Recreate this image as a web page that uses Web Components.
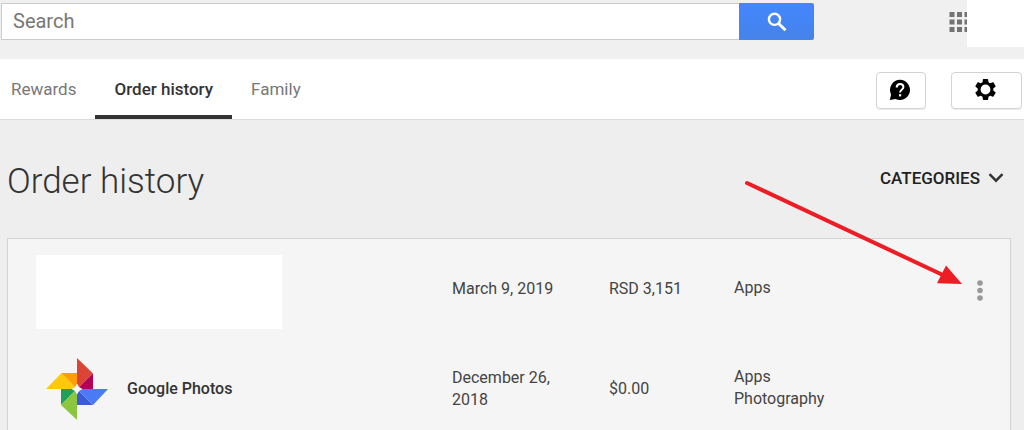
<!DOCTYPE html>
<html lang="en">
<head>
<meta charset="utf-8">
<title>Order history</title>
<style>
  html, body { margin: 0; height: 100%; }
  body { font-family: Roboto, "Liberation Sans", sans-serif; color: #333; background: #eee; overflow: hidden; }
</style>
</head>
<body>
<store-page>
  <search-header slot="header"></search-header>
  <tab-bar slot="tabs"></tab-bar>
  <page-title slot="title">Order history</page-title>
  <order-panel></order-panel>
</store-page>

<template id="store-page">
  <style>
    :host { display: block; position: relative; height: 100vh; overflow: hidden; }
    main { padding: 0 13px 16px 7px; }
  </style>
  <slot name="header"></slot>
  <slot name="tabs"></slot>
  <main>
    <slot name="title"></slot>
    <slot></slot>
  </main>
  <pointer-arrow></pointer-arrow>
</template>

<template id="search-header">
  <style>
    :host { display: flex; height: 59px; background: #f0f0f0; }
    form { flex: 1; display: flex; height: 37px; margin: 3px 0 0 1px; }
    input { flex: 1; min-width: 0; box-sizing: border-box; margin: 0; padding: 0 11px 2px; border: 1px solid #ccc; border-right: 0; border-radius: 0; background: #fff; font: 20px Roboto, sans-serif; color: #333; outline: 0; }
    input::placeholder { color: #777; opacity: 1; }
    button { border: 0; padding: 0; margin: 0; }
    .go { display: grid; place-items: center; width: 75px; border-radius: 0 2px 2px 0; background: linear-gradient(#4387fd, #4683ea); }
    .apps { width: 18px; height: 43px; margin-left: 135px; overflow: hidden; background: none; }
    .apps svg { display: block; }
    .account { width: 57px; height: 47px; background: #fff; }
  </style>
  <form role="search" onsubmit="return false">
    <input type="text" placeholder="Search" aria-label="Search">
    <button class="go" aria-label="Search">
      <svg width="20" height="20" viewBox="0 0 20 20" fill="none" stroke="#fff"><circle cx="7.500" cy="7.300" r="5.600" stroke-width="2.400"/><path d="M11.600 11.500 18.500 18.300" stroke-width="3"/></svg>
    </button>
  </form>
  <button class="apps" aria-label="Apps">
    <svg width="22" height="21" viewBox="0 0 22 21" fill="#737373"><path d="M.5 1h5v5h-5zM8 1h5v5H8zM15.500 1h5v5h-5zM.5 8.500h5v5h-5zM8 8.500h5v5H8zM15.500 8.500h5v5h-5zM.5 16h5v5h-5zM8 16h5v5H8zM15.500 16h5v5h-5z"/></svg>
  </button>
  <div class="account"></div>
</template>

<template id="tab-bar">
  <style>
    :host { display: flex; justify-content: space-between; height: 60px; background: #fff; border-bottom: 1px solid #dcdcdc; }
    nav { display: flex; }
    a { box-sizing: border-box; padding: 0 19px; font-size: 17px; line-height: 60px; color: #777; text-decoration: none; white-space: nowrap; }
    a:first-child { padding-left: 11px; }
    a.on { color: #333; font-weight: 500; border-bottom: 4px solid #333; }
    .tools { display: flex; gap: 25px; padding: 13px 2px 0 0; }
    button { display: grid; place-items: center; box-sizing: border-box; height: 37px; width: 50px; padding: 0 2px 2px 0; border: 1px solid #d3d3d3; border-radius: 4px; background: #fff; box-shadow: 0 1px 1px #eee; }
    button.wide { width: 71px; }
  </style>
  <nav>
    <a href="#rewards">Rewards</a>
    <a class="on" href="#orders" aria-current="page">Order history</a>
    <a href="#family">Family</a>
  </nav>
  <div class="tools">
    <button aria-label="Help">
      <svg width="22" height="22" viewBox="0 0 22 22"><path d="M11 .8A10.100 10.100 0 1 1 6.500 20L.8 21l1.300-5.500A10.100 10.100 0 0 1 11 .8z"/><path d="M7.700 8.500C7.700 6.300 9 5 11 5s3.400 1.300 3.400 3.100c0 2.700-3.300 2.700-3.300 5.300" fill="none" stroke="#fff" stroke-width="2"/><path d="M10 15.200h2.200v2.200H10z" fill="#fff"/></svg>
    </button>
    <button class="wide" aria-label="Settings">
      <svg width="25" height="25" viewBox="0 0 24 24"><path d="M19.430 12.980c.04-.32.07-.64.07-.98s-.03-.66-.07-.98l2.110-1.650c.19-.15.24-.42.12-.64l-2-3.460c-.12-.22-.39-.3-.61-.22l-2.490 1c-.52-.4-1.080-.73-1.690-.98l-.38-2.650C14.460 2.180 14.250 2 14 2h-4c-.25 0-.46.18-.49.42l-.38 2.650c-.61.25-1.170.59-1.690.98l-2.490-1c-.23-.09-.49 0-.61.22l-2 3.460c-.13.22-.07.49.12.64l2.110 1.650c-.04.32-.07.65-.07.98s.03.66.07.98l-2.110 1.650c-.19.15-.24.42-.12.64l2 3.460c.12.22.39.3.61.22l2.490-1c.52.4 1.080.73 1.690.98l.38 2.650c.03.24.24.42.49.42h4c.25 0 .46-.18.49-.42l.38-2.650c.61-.25 1.170-.59 1.690-.98l2.490 1c.23.09.49 0 .61-.22l2-3.460c.12-.22.07-.49-.12-.64z"/><circle cx="12" cy="12" r="4.700" fill="#fff"/></svg>
    </button>
  </div>
</template>

<template id="page-title">
  <style>
    :host { display: flex; justify-content: space-between; align-items: center; height: 118px; }
    h1 { margin: 0; padding-top: 6px; font-size: 35px; line-height: 44px; font-weight: 300; }
    button { display: flex; align-items: center; gap: 8px; padding: 0 7px 2px 0; border: 0; background: none; font: 500 17px Roboto, sans-serif; color: #222; }
  </style>
  <h1><slot></slot></h1>
  <button aria-haspopup="true">CATEGORIES
    <svg width="16" height="10" viewBox="0 0 16 10" fill="none" stroke="#333" stroke-width="2.400"><path d="M1.500 1.200 8 7.700l6.500-6.500"/></svg>
  </button>
</template>

<template id="order-panel">
  <style>
    :host { display: block; border: 1px solid #d3d3d3; background: #f5f5f5; }
    table { width: 100%; table-layout: fixed; border-collapse: collapse; font-size: 16px; line-height: 22px; color: #444; }
    .date { width: 157px; } .price { width: 125px; } .kind { width: 215px; } .menu { width: 61px; }
    td { padding: 0; height: 101px; text-align: left; vertical-align: middle; }
    tr:first-child td { height: 99px; }
    .app { display: flex; align-items: center; gap: 19px; padding-left: 38px; font-weight: 500; color: #333; }
    .blank { width: 246px; height: 74px; margin: 7px 0 0 28px; background: #fff; }
    td.when { padding-right: 40px; }
    ul { margin: 0; padding: 0 0 2px; list-style: none; }
    button { display: block; margin: 0 auto; padding: 3px 0 0; border: 0; background: none; }
    button svg { display: block; }
  </style>
  <table aria-label="Order history">
    <colgroup><col><col class="date"><col class="price"><col class="kind"><col class="menu"></colgroup>
    <tbody>
      <tr>
        <td><div class="blank"></div></td>
        <td class="when">March 9, 2019</td>
        <td>RSD 3,151</td>
        <td><ul><li>Apps</li></ul></td>
        <td><button aria-label="More options"><svg width="6" height="21" viewBox="0 0 6 21" fill="#999"><circle cx="3" cy="3" r="2.800"/><circle cx="3" cy="10.500" r="2.800"/><circle cx="3" cy="18" r="2.800"/></svg></button></td>
      </tr>
      <tr>
        <td><div class="app"><photos-logo></photos-logo>Google Photos</div></td>
        <td class="when">December 26, 2018</td>
        <td>$0.00</td>
        <td><ul><li>Apps</li><li>Photography</li></ul></td>
        <td></td>
      </tr>
    </tbody>
  </table>
</template>

<template id="photos-logo">
  <style>:host { display: block; width: 62px; height: 62px; } svg { display: block; }</style>
  <svg width="62" height="62" viewBox="0 0 62 62" role="img" aria-label="Google Photos logo">
    <path fill="#db4437" d="M31 0l16 15.500L31 31z"/><path fill="#b0005c" d="M47 15.500V31H31z"/>
    <path fill="#ffc80a" d="M0 31l15.500-16L31 31z"/><path fill="#ff9c0a" d="M15.500 15H31v16z"/>
    <path fill="#1ea05a" d="M15 31h16L15 47z"/><path fill="#8cc63f" d="M15 47l16-16v31z"/>
    <path fill="#3b5bdb" d="M31 31v16h16z"/><path fill="#4a7af5" d="M31 31h31L47 47z"/>
    <path fill="#f8f8f8" d="M31 25.500l2 3.500 3.500 2-3.500 2-2 3.500-2-3.500-3.500-2 3.500-2z"/>
  </svg>
</template>

<template id="pointer-arrow">
  <style>
    :host { position: absolute; top: 180px; right: 60px; pointer-events: none; }
    svg { display: block; }
  </style>
  <svg width="220" height="106" viewBox="0 0 220 106"><path d="M3 3l198 93" stroke="#ee1c24" stroke-width="4" stroke-linecap="round"/><path fill="#ee1c24" d="M202 85.500l16 18.500-25-.8z"/></svg>
</template>

<script>
  for (const name of ["pointer-arrow", "photos-logo", "order-panel", "page-title", "tab-bar", "search-header", "store-page"]) {
    customElements.define(name, class extends HTMLElement {
      constructor() {
        super();
        this.attachShadow({ mode: "open" }).append(document.getElementById(name).content.cloneNode(true));
      }
    });
  }
</script>
</body>
</html>
